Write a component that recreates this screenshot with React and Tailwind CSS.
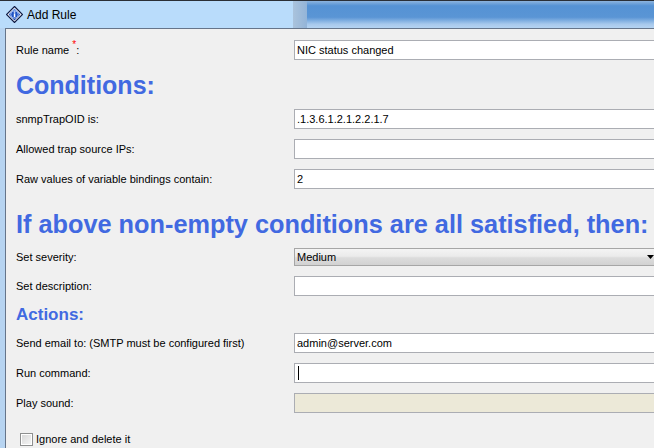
import React from "react";

function InfoIcon() {
  return (
    <svg width="17" height="17" viewBox="0 0 17 17">
      <defs>
        <linearGradient id="inf" x1="0" y1="0" x2="0" y2="1">
          <stop offset="0" stopColor="#5f8fe8" />
          <stop offset="1" stopColor="#173f9e" />
        </linearGradient>
      </defs>
      <polygon points="8.5,0.5 16.5,8.5 8.5,16.5 0.5,8.5" fill="#ffffff" stroke="#0e1a45" strokeWidth="1.2" />
      <polygon points="8.5,2.6 14.4,8.5 8.5,14.4 2.6,8.5" fill="url(#inf)" />
      <circle cx="8.5" cy="8.5" r="3.8" fill="#1f52c4" stroke="#a9c3f5" strokeWidth="0.9" />
      <rect x="7.8" y="5.4" width="1.5" height="1.3" fill="#ffffff" />
      <rect x="7.8" y="7.3" width="1.5" height="3.9" fill="#ffffff" />
    </svg>
  );
}

function TextField({ value, disabled, cursor }) {
  return (
    <div
      className={`w-[400px] h-[20px] shrink-0 border border-[#abadb3] flex items-center pl-[2px] text-black ${
        disabled ? "bg-[#ece9d8]" : "bg-white"
      }`}
    >
      {cursor && <span className="w-px h-[14px] bg-black ml-px" />}
      {value}
    </div>
  );
}

function Row({ label, children, className = "mt-[10px]" }) {
  return (
    <div className={`flex items-center ${className}`}>
      <div className="w-[278px] shrink-0 text-black">{label}</div>
      {children}
    </div>
  );
}

function Heading({ children, size, className }) {
  return (
    <div className={`font-bold leading-none text-[#4169e1] whitespace-nowrap ${size} ${className}`}>
      {children}
    </div>
  );
}

export default function App() {
  return (
    <div className="w-[654px] h-[448px] overflow-hidden bg-[#b7d4f1] font-['Liberation_Sans',Arial,sans-serif] text-[11px] flex flex-col">
      {/* title bar */}
      <div className="h-[28px] shrink-0 border-t border-[#2a2f36] flex">
        <div className="w-[293px] shrink-0 bg-[#b9dcfb] flex items-center pl-[6px] gap-[4px]">
          <InfoIcon />
          <span className="text-[12px] text-black leading-none">Add Rule</span>
        </div>
        <div className="w-[14px] shrink-0 bg-[linear-gradient(to_right,#aac3dc,#93b4d8)]" />
        <div className="flex-1 bg-[linear-gradient(to_bottom,#8db4de_0%,#5592d4_18%,#5a95d5_60%,#a8c9ec_86%,#b4d3f2_100%)]" />
      </div>

      <div className="flex flex-1">
        <div className="w-[5px] shrink-0" />
        <div className="flex-1 bg-[#f0f0f0] border-l border-t border-[#66758a] pl-[10px]">
          <Row
            className="mt-[11px]"
            label={
              <span>
                Rule name <span className="relative -top-[6px] text-[#ff0000] text-[10px]">*</span>:
              </span>
            }
          >
            <TextField value="NIC status changed" />
          </Row>

          <Heading size="text-[25px]" className="mt-[13px] h-[25px]">
            Conditions:
          </Heading>

          <Row className="mt-[11px]" label="snmpTrapOID is:">
            <TextField value=".1.3.6.1.2.1.2.2.1.7" />
          </Row>
          <Row label="Allowed trap source IPs:">
            <TextField value="" />
          </Row>
          <Row label="Raw values of variable bindings contain:">
            <TextField value="2" />
          </Row>

          <Heading size="text-[25.3px]" className="mt-[23px] h-[25px]">
            If above non-empty conditions are all satisfied, then:
          </Heading>

          <Row className="mt-[11px]" label="Set severity:">
            <div className="w-[364px] h-[18px] shrink-0 border border-[#a6a6a6] bg-[linear-gradient(to_bottom,#f4f4f4_0%,#ebebeb_45%,#dcdcdc_55%,#d2d2d2_100%)] flex items-center justify-between pl-[2px] pr-[3px] text-black">
              <span>Medium</span>
              <svg width="7" height="4" viewBox="0 0 7 4">
                <polygon points="0,0 7,0 3.5,4" fill="#000000" />
              </svg>
            </div>
          </Row>
          <Row label="Set description:">
            <TextField value="" />
          </Row>

          <Heading size="text-[17px]" className="mt-[10px] h-[17px]">
            Actions:
          </Heading>

          <Row label="Send email to: (SMTP must be configured first)">
            <TextField value="admin@server.com" />
          </Row>
          <Row label="Run command:">
            <TextField value="" cursor />
          </Row>
          <Row label="Play sound:">
            <TextField value="" disabled />
          </Row>

          <label className="flex items-center mt-[18px] ml-[4px] gap-[3px] text-black">
            <span className="w-[13px] h-[13px] border border-[#8e8f8f] bg-[linear-gradient(135deg,#d6d6d6,#f7f7f7)] shadow-[inset_0_0_0_1px_#ffffff]" />
            <span>Ignore and delete it</span>
          </label>
        </div>
      </div>
    </div>
  );
}
